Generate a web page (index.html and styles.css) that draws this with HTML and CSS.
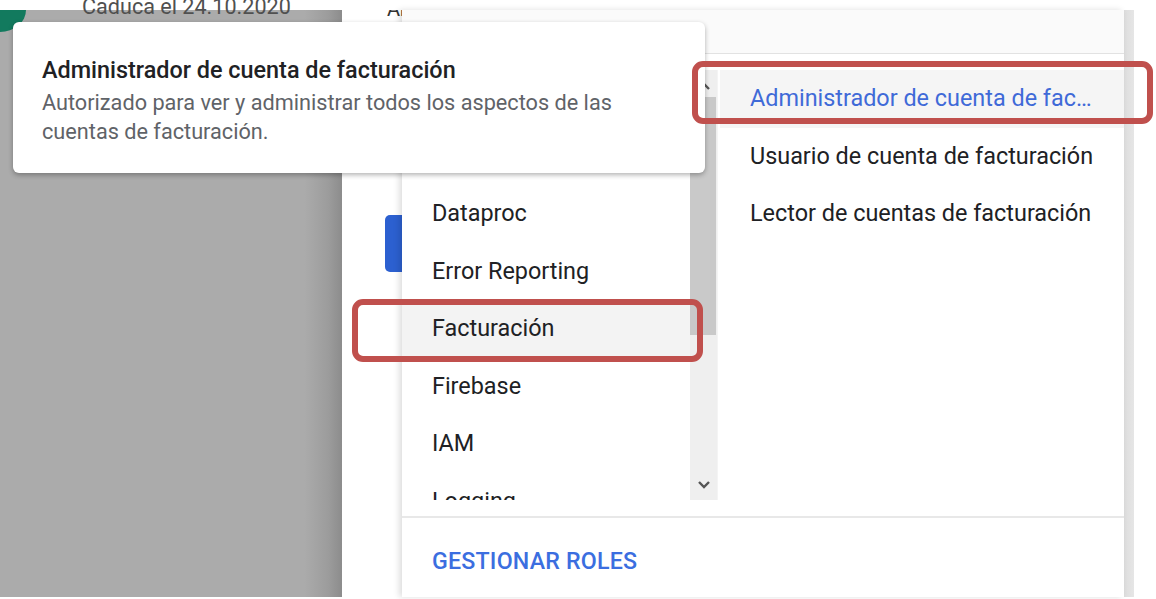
FILE: index.html
```html
<!DOCTYPE html>
<html lang="es">
<head>
<meta charset="utf-8">
<title>Roles</title>
<link rel="stylesheet" href="styles.css">
</head>
<body>
<div class="frame">
  <div class="scrim">
    <div class="avatar"></div>
    <div class="expiry">Caduca el 24.10.2020</div>
  </div>
  <div class="dialog-edge">
    <div class="edge-text">Añadir</div>
    <div class="primary-btn"></div>
  </div>
  <div class="menu">
    <div class="menu-header"></div>
    <div class="menu-body">
      <div class="services">
        <div class="service-list">
          <div class="item">Data Catalog</div>
          <div class="item">Dataflow</div>
          <div class="item">Dataproc</div>
          <div class="item">Error Reporting</div>
          <div class="item item-active">Facturación</div>
          <div class="item">Firebase</div>
          <div class="item">IAM</div>
          <div class="item">Logging</div>
        </div>
        <div class="track">
          <svg class="arrow arrow-up" width="14" height="10" viewBox="0 0 14 10"><path d="M2 8 L7 3 L12 8" fill="none" stroke="#555" stroke-width="2.4"/></svg>
          <div class="thumb"></div>
          <svg class="arrow arrow-down" width="14" height="10" viewBox="0 0 14 10"><path d="M2 2 L7 7 L12 2" fill="none" stroke="#555" stroke-width="2.4"/></svg>
        </div>
      </div>
      <div class="roles">
        <div class="item role-selected">Administrador de cuenta de facturación</div>
        <div class="item">Usuario de cuenta de facturación</div>
        <div class="item">Lector de cuentas de facturación</div>
      </div>
    </div>
    <div class="menu-footer">GESTIONAR ROLES</div>
  </div>
  <div class="page-scroll"></div>

  <div class="tooltip">
    <div class="tip-title">Administrador de cuenta de facturación</div>
    <div class="tip-desc">Autorizado para ver y administrar todos los aspectos de las cuentas de facturación.</div>
  </div>
  <div class="mark mark-role"></div>
  <div class="mark mark-service"></div>
</div>
</body>
</html>
```

FILE: styles.css
```css
html, body {
  margin: 0;
  padding: 0;
  background: #ffffff;
}
body {
  width: 1156px;
  height: 599px;
  overflow: hidden;
  font-family: Roboto, "Noto Sans", "Liberation Sans", sans-serif;
  color: #202124;
}
.frame {
  position: relative;
  margin-top: 10px;
  width: 1134px;
  height: 587px;
  display: flex;
}
.scrim {
  position: relative;
  width: 342px;
  flex: none;
  background: linear-gradient(to right, #ababab 0, #ababab 89%, #9c9c9c 96%, #8c8c8c 100%);
}
.avatar {
  position: absolute;
  left: 0;
  top: 0;
  width: 26px;
  height: 22px;
  border-bottom-right-radius: 26px 22px;
  background: #127a5e;
}
.expiry {
  position: absolute;
  left: 82px;
  top: -18px;
  font-size: 21.6px;
  line-height: 30px;
  color: #505050;
  white-space: nowrap;
}
.dialog-edge {
  position: relative;
  width: 60px;
  flex: none;
  background: #ffffff;
  overflow: hidden;
}
.edge-text {
  position: absolute;
  left: 45px;
  top: -14px;
  font-size: 20px;
  line-height: 26px;
  color: #333;
  white-space: nowrap;
}
.primary-btn {
  position: absolute;
  left: 43px;
  top: 205px;
  width: 30px;
  height: 57px;
  border-radius: 5px;
  background: #2c60d0;
}
.menu {
  position: relative;
  width: 722px;
  flex: none;
  display: flex;
  flex-direction: column;
  background: #ffffff;
  box-shadow: -3px 0 6px rgba(0, 0, 0, 0.13);
}
.menu-header {
  height: 43px;
  background: #fafafa;
  border-bottom: 1px solid #e2e2e2;
  flex: none;
}
.menu-body {
  display: flex;
  margin-top: 16px;
  height: 430px;
  flex: none;
}
.services {
  width: 316px;
  flex: none;
  display: flex;
}
.service-list {
  flex: 1;
  overflow: hidden;
}
.item {
  height: 57.5px;
  line-height: 57.5px;
  padding: 0 30px;
  font-size: 23.4px;
  color: #202124;
  white-space: nowrap;
  overflow: hidden;
  text-overflow: ellipsis;
}
.item-active {
  background: #f3f3f3;
}
.track {
  position: relative;
  width: 27px;
  flex: none;
  background: #efefef;
  border-right: 1px solid #f4f4f4;
}
.thumb {
  position: absolute;
  left: 0;
  top: 27px;
  width: 26px;
  height: 238px;
  background: #c9c9c9;
}
.arrow {
  position: absolute;
  left: 7px;
}
.arrow-up {
  top: 11px;
}
.arrow-down {
  top: 410px;
}
.roles {
  flex: 1;
  min-width: 0;
  padding-left: 2px;
}
.roles .item {
  padding: 0 30px 0 30px;
}
.role-selected {
  background: #f5f5f5;
  color: #3f6ad8;
}
.menu-footer {
  border-top: 2px solid #e8e8e8;
  margin-top: 16px;
  flex: 1;
  padding: 29px 30px 0;
  font-size: 23.2px;
  font-weight: 500;
  color: #3b6ee0;
  letter-spacing: 0.2px;
}
.page-scroll {
  width: 10px;
  flex: none;
  background: linear-gradient(to right, #dddddd, #e6e6e6);
}
.tooltip {
  position: absolute;
  left: 13px;
  top: 12px;
  width: 692px;
  height: 151px;
  box-sizing: border-box;
  padding: 33px 29px 0;
  background: #ffffff;
  border-radius: 6px;
  box-shadow: 0 2px 5px rgba(0, 0, 0, 0.3);
}
.tip-title {
  font-size: 23.4px;
  font-weight: 500;
  line-height: 30px;
  color: #202124;
}
.tip-desc {
  font-size: 21.7px;
  line-height: 29px;
  margin-top: 3px;
  color: #5f6368;
  width: 600px;
}
.mark {
  position: absolute;
  border: 6px solid #c0504d;
  border-radius: 11px;
  box-sizing: border-box;
}
.mark-role {
  left: 692px;
  top: 51px;
  width: 461px;
  height: 63px;
}
.mark-service {
  left: 352px;
  top: 289px;
  width: 351px;
  height: 63px;
}
```
